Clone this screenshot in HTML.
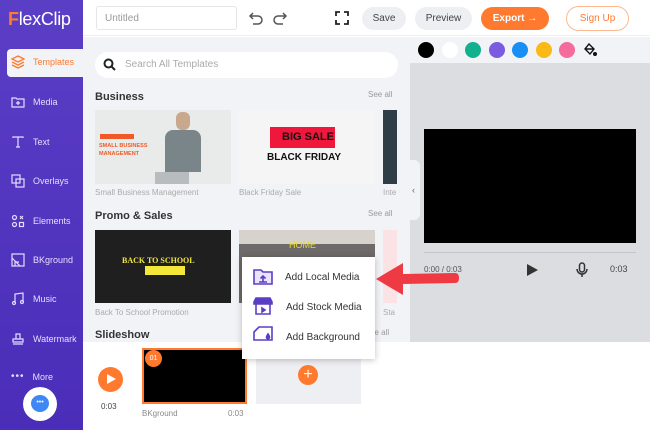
<!DOCTYPE html>
<html><head><meta charset="utf-8"><style>
*{margin:0;padding:0;box-sizing:border-box}
body{width:650px;height:430px;overflow:hidden;font-family:"Liberation Sans",sans-serif;background:#fff;position:relative}
.abs{position:absolute}
.side{left:0;top:0;width:83px;height:430px;background:linear-gradient(180deg,#5b3ec6,#4a2db8)}
.nav{position:absolute;left:0;width:83px;color:#e4ddff;font-size:9px;display:flex;align-items:center;gap:8px;padding-left:11px}
.nav svg{width:14px;height:14px}
.txtg{color:#aaa;font-size:8px}
.h{font-size:11px;font-weight:bold;color:#333}
.see{font-size:8px;color:#999}
.dot{position:absolute;top:42px;width:16px;height:16px;border-radius:50%}
</style></head><body>
<div class="abs side"></div>
<div class="abs" style="left:8px;top:9px;font-size:18px;color:#fff;letter-spacing:-0.3px"><span style="color:#ff7a2f;font-weight:bold">F</span>lexClip</div>
<div class="abs" style="left:7px;top:49px;width:76px;height:28px;background:#f2f3f7;border-radius:4px 0 0 4px"></div>
<div class="nav" style="top:55px;color:#ff7a2f"><svg viewBox="0 0 14 14" fill="none" stroke="#ff7a2f" stroke-width="1.3"><path d="M7 1L13 4 7 7 1 4Z M1 7l6 3 6-3 M1 10l6 3 6-3"/></svg>Templates</div>
<div class="nav" style="top:95px"><svg viewBox="0 0 14 14" fill="none" stroke="#e4ddff" stroke-width="1.2"><path d="M1 3h4l1 1h7v8H1Z M7 6v4 M5 8h4"/></svg>Media</div>
<div class="nav" style="top:135px"><svg viewBox="0 0 14 14" fill="none" stroke="#e4ddff" stroke-width="1.2"><path d="M2 3V2h10v1 M7 2v10 M5 12h4"/></svg>Text</div>
<div class="nav" style="top:174px"><svg viewBox="0 0 14 14" fill="none" stroke="#e4ddff" stroke-width="1.2"><rect x="1" y="1" width="8" height="8"/><rect x="5" y="5" width="8" height="8"/></svg>Overlays</div>
<div class="nav" style="top:214px"><svg viewBox="0 0 14 14" fill="none" stroke="#e4ddff" stroke-width="1.2"><circle cx="3.5" cy="3.5" r="2"/><path d="M9 2l3 3M12 2l-3 3"/><circle cx="3.5" cy="10.5" r="2"/><rect x="8.5" y="8.5" width="4" height="4"/></svg>Elements</div>
<div class="nav" style="top:253px"><svg viewBox="0 0 14 14" fill="none" stroke="#e4ddff" stroke-width="1.2"><rect x="1" y="1" width="12" height="12"/><path d="M1 5l8 8M4 13V9h4"/></svg>BKground</div>
<div class="nav" style="top:292px"><svg viewBox="0 0 14 14" fill="none" stroke="#e4ddff" stroke-width="1.2"><path d="M4 11V2l8-1v9"/><circle cx="3" cy="11" r="1.5"/><circle cx="11" cy="10" r="1.5"/></svg>Music</div>
<div class="nav" style="top:332px"><svg viewBox="0 0 14 14" fill="none" stroke="#e4ddff" stroke-width="1.2"><path d="M5 2h4v5H5Z M2 7h10v3H2Z M2 12h10"/></svg>Watermark</div>
<div class="nav" style="top:371px"><span style="font-size:10px;letter-spacing:1px">•••</span>More</div>
<div class="abs" style="left:23px;top:387px;width:34px;height:34px;border-radius:50%;background:#fff"></div>
<div class="abs" style="left:31px;top:395px;width:18px;height:17px;border-radius:50%;background:#3f87f5;color:#fff;font-size:7px;text-align:center;line-height:16px">•••</div>

<!-- top bar -->
<div class="abs" style="left:83px;top:0;width:567px;height:36px;background:#fff;border-bottom:1px solid #eee"></div>
<div class="abs" style="left:96px;top:6px;width:141px;height:24px;border:1px solid #e6e6e6;border-radius:3px;font-size:10px;color:#999;padding:6px 8px">Untitled</div>
<svg class="abs" style="left:248px;top:10px" width="40" height="16" viewBox="0 0 40 16" fill="none" stroke="#555" stroke-width="1.5"><path d="M5 3L2 6l3 3M2 6h8a4 4 0 010 8H5"/><path d="M35 3l3 3-3 3M38 6h-8a4 4 0 000 8h5"/></svg>
<svg class="abs" style="left:335px;top:11px" width="14" height="14" viewBox="0 0 14 14" fill="none" stroke="#222" stroke-width="1.8"><path d="M1 5V1h4M9 1h4v4M13 9v4H9M5 13H1V9"/></svg>
<div class="abs" style="left:362px;top:7px;width:44px;height:23px;border-radius:12px;background:#eeeff3;font-size:10px;color:#444;text-align:center;line-height:23px">Save</div>
<div class="abs" style="left:415px;top:7px;width:57px;height:23px;border-radius:12px;background:#eeeff3;font-size:10px;color:#444;text-align:center;line-height:23px">Preview</div>
<div class="abs" style="left:481px;top:7px;width:68px;height:23px;border-radius:12px;background:#ff7a2f;font-size:10px;font-weight:bold;color:#fff;text-align:center;line-height:23px">Export →</div>
<div class="abs" style="left:566px;top:6px;width:63px;height:25px;border-radius:13px;border:1px solid #ffb78d;font-size:10px;color:#ff7a2f;text-align:center;line-height:23px">Sign Up</div>

<!-- left panel -->
<div class="abs" style="left:83px;top:37px;width:327px;height:305px;background:#f2f3f7"></div>
<div class="abs" style="left:95px;top:52px;width:303px;height:26px;background:#fff;border-radius:13px;font-size:10px;color:#aaa;padding:7px 0 0 30px">Search All Templates</div>
<svg class="abs" style="left:103px;top:58px" width="13" height="13" viewBox="0 0 13 13" fill="none" stroke="#222" stroke-width="2"><circle cx="5.5" cy="5.5" r="4"/><path d="M8.5 8.5L12 12"/></svg>
<div class="abs h" style="left:95px;top:91px">Business</div>
<div class="abs see" style="left:368px;top:90px">See all</div>
<div class="abs" style="left:95px;top:110px;width:136px;height:74px;background:#e8ebe9"></div>
<div class="abs" style="left:100px;top:134px;width:34px;height:5px;background:#f05a28"></div>
<div class="abs" style="left:99px;top:142px;font-size:5.5px;font-weight:bold;color:#f05a28;line-height:8px">SMALL BUSINESS<br>MANAGEMENT</div>
<div class="abs" style="left:165px;top:130px;width:36px;height:42px;background:#7a858a;border-radius:8px 8px 0 0"></div>
<div class="abs" style="left:176px;top:112px;width:14px;height:18px;background:#c9a98e;border-radius:6px"></div>
<div class="abs" style="left:155px;top:172px;width:34px;height:12px;background:#b9bcbe"></div>
<div class="abs" style="left:239px;top:110px;width:136px;height:74px;background:#f5f5f5"></div>
<div class="abs" style="left:270px;top:127px;width:65px;height:21px;background:#f0173d;font-size:11px;font-weight:bold;color:#111;line-height:21px;padding-left:12px">BIG SALE</div>
<div class="abs" style="left:267px;top:152px;font-size:10px;font-weight:bold;color:#111">BLACK FRIDAY</div>
<div class="abs" style="left:383px;top:110px;width:14px;height:74px;background:#2f3d46"></div>
<div class="abs txtg" style="left:95px;top:188px">Small Business Management</div>
<div class="abs txtg" style="left:239px;top:188px">Black Friday Sale</div>
<div class="abs txtg" style="left:383px;top:188px">Inte</div>
<div class="abs h" style="left:95px;top:210px">Promo &amp; Sales</div>
<div class="abs see" style="left:368px;top:209px">See all</div>
<div class="abs" style="left:95px;top:230px;width:136px;height:73px;background:#1f1f1f"></div>
<div class="abs" style="left:122px;top:256px;font-size:8px;font-weight:bold;color:#f3e83a;font-family:'Liberation Serif',serif">BACK TO SCHOOL</div>
<div class="abs" style="left:145px;top:266px;width:40px;height:9px;background:#f3e83a"></div>
<div class="abs" style="left:239px;top:230px;width:136px;height:73px;background:#6d6a69"></div>
<div class="abs" style="left:239px;top:230px;width:136px;height:14px;background:#d8d2cd"></div>
<div class="abs" style="left:289px;top:240px;font-size:9px;color:#e8dc2c">HOME</div>
<div class="abs" style="left:383px;top:230px;width:14px;height:73px;background:#fbe3e5"></div>
<div class="abs txtg" style="left:95px;top:308px">Back To School Promotion</div>
<div class="abs txtg" style="left:383px;top:308px">Sta</div>
<div class="abs h" style="left:95px;top:329px">Slideshow</div>
<div class="abs see" style="left:370px;top:328px">ee all</div>

<!-- right -->
<div class="abs" style="left:410px;top:37px;width:240px;height:305px;background:#dcdde1"></div>
<div class="abs" style="left:410px;top:37px;width:240px;height:26px;background:#f2f3f7"></div>
<div class="abs" style="left:410px;top:160px;width:10px;height:60px;background:#f2f3f7;border-radius:0 6px 6px 0;font-size:9px;color:#666;line-height:60px;padding-left:2px">‹</div>
<div class="dot" style="left:418px;background:#000"></div>
<div class="dot" style="left:442px;background:#fff"></div>
<div class="dot" style="left:465px;background:#12b08c"></div>
<div class="dot" style="left:489px;background:#7b5be0"></div>
<div class="dot" style="left:512px;background:#1a8ff3"></div>
<div class="dot" style="left:536px;background:#fbb916"></div>
<div class="dot" style="left:559px;background:#f56b9b"></div>
<svg class="abs" style="left:583px;top:43px" width="14" height="14" viewBox="0 0 14 14" fill="none" stroke="#111" stroke-width="1.4"><path d="M6 1l5 5-4 5-5-5Z M2 6h9"/><circle cx="12" cy="11" r="1.3" fill="#111"/></svg>
<div class="abs" style="left:424px;top:129px;width:212px;height:114px;background:#000"></div>
<div class="abs" style="left:424px;top:252px;width:212px;height:1px;background:#c4c5c9"></div>
<div class="abs" style="left:424px;top:265px;font-size:8px;color:#555">0:00 / 0:03</div>
<div class="abs" style="left:527px;top:264px;width:0;height:0;border-left:11px solid #333;border-top:6px solid transparent;border-bottom:6px solid transparent"></div>
<svg class="abs" style="left:576px;top:262px" width="12" height="16" viewBox="0 0 12 16" fill="none" stroke="#333" stroke-width="1.5"><rect x="3.5" y="1" width="5" height="9" rx="2.5"/><path d="M1 7a5 5 0 0010 0M6 12v3"/></svg>
<div class="abs" style="left:610px;top:264px;font-size:9px;color:#444">0:03</div>

<!-- timeline -->
<div class="abs" style="left:98px;top:367px;width:25px;height:25px;border-radius:50%;background:#ff7a2f"></div>
<div class="abs" style="left:107px;top:374px;width:0;height:0;border-left:9px solid #fff;border-top:5px solid transparent;border-bottom:5px solid transparent"></div>
<div class="abs" style="left:101px;top:402px;font-size:8px;color:#444">0:03</div>
<div class="abs" style="left:142px;top:348px;width:105px;height:56px;background:#000;border:2px solid #ff7a2f"></div>
<div class="abs" style="left:145px;top:350px;width:17px;height:17px;border-radius:50%;background:#ff7a2f;color:#fff;font-size:7px;text-align:center;line-height:17px">01</div>
<div class="abs txtg" style="left:142px;top:409px;font-size:8px;color:#888">BKground</div>
<div class="abs txtg" style="left:228px;top:409px;font-size:8px;color:#888">0:03</div>
<div class="abs" style="left:256px;top:348px;width:105px;height:56px;background:#eeeff3"></div>
<div class="abs" style="left:298px;top:365px;width:20px;height:20px;border-radius:50%;background:#ff7a2f;color:#fff;font-size:16px;text-align:center;line-height:20px">+</div>

<!-- menu -->
<div class="abs" style="left:242px;top:257px;width:133px;height:102px;background:#fff;box-shadow:0 1px 6px rgba(0,0,0,.25)"></div>
<svg class="abs" style="left:252px;top:268px" width="22" height="84" viewBox="0 0 22 84" fill="none" stroke="#5b3ec6" stroke-width="1.6">
<path d="M2 2h7l2 2h9v12H2Z" fill="#e9e4fb"/><path d="M11 14V8M8.5 10.5L11 8l2.5 2.5M7 14h8"/>
<path d="M2 34l2-4h14l2 4v2H2Z" fill="#5b3ec6"/><path d="M4 36v10h14V36"/><path d="M10 40v4l3-2Z" fill="#5b3ec6"/>
<path d="M4 62l3-3h13v13H2V64Z"/><path d="M16 66c-2 3-2 4 0 5 2-1 2-2 0-5Z" fill="#5b3ec6"/>
</svg>
<div class="abs" style="left:285px;top:272px;font-size:10px;color:#333">Add Local Media</div>
<div class="abs" style="left:286px;top:302px;font-size:10px;color:#333">Add Stock Media</div>
<div class="abs" style="left:286px;top:332px;font-size:10px;color:#333">Add Background</div>

<!-- arrow -->
<svg class="abs" style="left:370px;top:258px" width="90" height="44" viewBox="0 0 90 44">
<path d="M6 21L33 5v11l52-1c3 0 4 2 4 5s-1 5-4 5l-52 1v11Z" fill="#ee3a43"/>
</svg>
</body></html>
